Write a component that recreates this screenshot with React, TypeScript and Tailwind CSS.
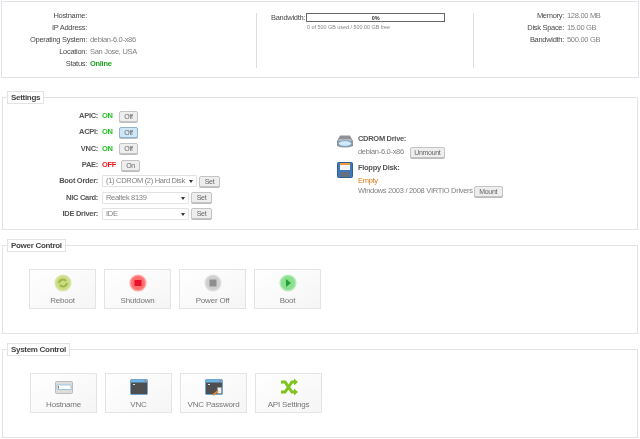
import type { ReactNode } from "react";

const LABEL = "text-[#4a4a4a]";
const VALUE = "text-[#808080]";

function Info({ label, width, children }: { label: string; width: string; children?: ReactNode }) {
  return (
    <div className="flex h-3 items-center whitespace-nowrap">
      <span className={`${width} shrink-0 text-right ${LABEL}`}>{label}</span>
      <span className={`ml-[3px] ${VALUE}`}>{children}</span>
    </div>
  );
}

function Btn({ children, active, width }: { children: ReactNode; active?: boolean; width: string }) {
  return (
    <span
      className={`inline-flex h-[11px] shrink-0 items-center justify-center rounded-[2px] border text-[7px] leading-none text-[#666] shadow-[0_1px_0_#bbb] ${width} ${
        active ? "border-[#8fb4d0] bg-[#cfe6f7]" : "border-[#c4c4c4] bg-[#eee]"
      }`}
    >
      {children}
    </span>
  );
}

function Toggle({ label, on, btn, active }: { label: string; on: boolean; btn: string; active?: boolean }) {
  return (
    <div className="flex h-[16.3px] items-center">
      <span className="w-[95px] shrink-0 text-right font-bold text-[#555]">{label}</span>
      <span className={`ml-[4px] font-bold ${on ? "w-[17px] text-[#1fc31f]" : "w-[19px] text-[#f01818]"}`}>{on ? "ON" : "OFF"}</span>
      <Btn active={active} width="w-[19px]">{btn}</Btn>
    </div>
  );
}

function Pick({ label, value, width }: { label: string; value: string; width: string }) {
  return (
    <div className="flex h-[16.3px] items-center">
      <span className="w-[95px] shrink-0 text-right font-bold text-[#555]">{label}</span>
      <span className={`relative ml-[4px] mr-[2px] flex h-[12px] items-center overflow-hidden whitespace-nowrap rounded-[1px] border border-[#e2e2e2] bg-white pl-[3px] ${width} ${VALUE}`}>
        {value}
        <span className="absolute right-[3px] top-[4px] h-0 w-0 border-x-[2.5px] border-t-[3px] border-x-transparent border-t-[#333]" />
      </span>
      <Btn width="w-[21px]">Set</Btn>
    </div>
  );
}

function Section({ title, className, children }: { title: string; className: string; children: ReactNode }) {
  return (
    <fieldset className={`mx-[2px] border border-[#e3e3e3] ${className}`}>
      <legend className="ml-[4px] border border-[#e3e3e3] bg-white px-[3px] text-[8px] font-bold leading-[11px] tracking-[-0.3px] text-[#444]">{title}</legend>
      {children}
    </fieldset>
  );
}

function Tile({ label, icon }: { label: string; icon: ReactNode }) {
  return (
    <div className="flex h-10 w-[67px] flex-col items-center border border-[#e4e4e4] bg-gradient-to-br from-white to-[#f5f5f5] pt-[4px]">
      <svg width="18" height="18" viewBox="0 0 18 18">{icon}</svg>
      <span className="mt-[4px] text-[8px] leading-[10px] tracking-[-0.2px] text-[#777]">{label}</span>
    </div>
  );
}

function Circle({ fill, edge }: { fill: string; edge: string }) {
  return <circle cx="9" cy="9" r="7.8" fill={fill} stroke={edge} strokeWidth="1.5" />;
}

function Window({ badge }: { badge?: boolean }) {
  return (
    <>
      <rect x="0.5" y="1.5" width="17" height="15" rx="1" fill="#4f4f4f" stroke="#6fa6cf" />
      <rect x="1" y="2" width="16" height="2.5" fill="#6db4e4" />
      <rect x="14.5" y="2.5" width="1.5" height="1" fill="#e05050" />
      <rect x="3" y="6" width="2" height="1" fill="#ddd" />
      {badge && (
        <>
          <rect x="12.5" y="9.5" width="4" height="6" fill="#eee" stroke="#999" strokeWidth="0.5" />
          <path d="M8 17 L13 13" stroke="#e08a2e" strokeWidth="1.8" />
        </>
      )}
    </>
  );
}

export default function App() {
  return (
    <div className="h-[439px] w-[640px] overflow-hidden bg-white pt-px font-['Liberation_Sans',sans-serif] text-[7.5px] leading-3 tracking-[-0.3px] blur-[0.35px]">
      <div className="mx-px flex h-[77px] border border-[#dfe3e8] pt-[11px]">
        <div className="h-[55px] w-[255px] border-r border-[#ddd]">
          <div className="-mt-[3px]">
            <Info label="Hostname:" width="w-[85px]" />
            <Info label="IP Address:" width="w-[85px]" />
            <Info label="Operating System:" width="w-[85px]">debian-6.0-x86</Info>
            <Info label="Location:" width="w-[85px]">San Jose, USA</Info>
            <Info label="Status:" width="w-[85px]"><span className="font-bold text-[#1aa51a]">Online</span></Info>
          </div>
        </div>
        <div className="h-[55px] w-[217px] border-r border-[#ddd] pl-[14px]">
          <div className="flex h-[9px] items-center">
            <span className={LABEL}>Bandwidth:</span>
            <div className="ml-px flex h-[9px] w-[139px] items-center justify-center border border-[#666] text-[5.5px] font-bold tracking-normal text-[#333]">0%</div>
          </div>
          <div className="ml-[36px] mt-[1px] text-[5.4px] leading-[8px] tracking-normal text-[#888]">0 of 500 GB used / 500.00 GB free</div>
        </div>
        <div>
          <div className="-mt-[3px]">
            <Info label="Memory:" width="w-[90px]">128.00 MB</Info>
            <Info label="Disk Space:" width="w-[90px]">15.00 GB</Info>
            <Info label="Bandwidth:" width="w-[90px]">500.00 GB</Info>
          </div>
        </div>
      </div>

      <Section title="Settings" className="mt-[13px] h-[139px]">
        <div className="flex">
          <div className="w-[333px] pt-[4px]">
            <Toggle label="APIC:" on btn="Off" />
            <Toggle label="ACPI:" on btn="Off" active />
            <Toggle label="VNC:" on btn="Off" />
            <Toggle label="PAE:" on={false} btn="On" />
            <Pick label="Boot Order:" value="(1) CDROM (2) Hard Disk" width="w-[95px]" />
            <Pick label="NIC Card:" value="Realtek 8139" width="w-[87px]" />
            <Pick label="IDE Driver:" value="IDE" width="w-[87px]" />
          </div>
          <div className="pt-[29px]">
            <div className="flex gap-[4px]">
              <svg width="18" height="16" viewBox="0 0 18 16" className="mt-[1px]">
                <path d="M1 7 L4 1.5 H14 L17 7 V12 Q9 15 1 12 Z" fill="#8f9398" />
                <path d="M3 5 H15 L16 7 H2 Z" fill="#b5b8bc" />
                <ellipse cx="9" cy="9.5" rx="6.5" ry="2.8" fill="#d5e8f5" stroke="#6fa8d6" strokeWidth="0.8" />
              </svg>
              <div>
                <div className="font-bold leading-[11px] text-[#555]">CDROM Drive:</div>
                <div className="mt-[2px] flex items-center gap-[6px]">
                  <span className={VALUE}>debian-6.0-x86</span>
                  <Btn width="w-[35px]">Unmount</Btn>
                </div>
              </div>
            </div>
            <div className="mt-[4px] flex gap-[4px]">
              <svg width="16" height="16" viewBox="0 0 16 16" className="ml-[1px] mr-px">
                <rect x="0.5" y="0.5" width="15" height="15" rx="1" fill="#3f79b8" stroke="#2e5f96" />
                <rect x="3" y="1" width="10" height="2" fill="#ef9c3e" />
                <rect x="3" y="3" width="10" height="5" fill="#f4f4f4" />
                <rect x="4" y="10" width="8" height="5" fill="#6b7078" />
              </svg>
              <div>
                <div className="font-bold leading-[11px] text-[#555]">Floppy Disk:</div>
                <div className="mt-[4px] leading-[8px] text-[#e07b1a]">Empty</div>
                <div className="flex items-center gap-[1px]">
                  <span className={`whitespace-nowrap ${VALUE}`}>Windows 2003 / 2008 VIRTIO Drivers</span>
                  <Btn width="w-[29px]">Mount</Btn>
                </div>
              </div>
            </div>
          </div>
        </div>
      </Section>

      <Section title="Power Control" className="mt-[9px] h-[95px]">
        <div className="flex gap-2 pl-[26px] pt-[17px]">
          <Tile label="Reboot" icon={<><Circle fill="#cbdc85" edge="#dbe5a8" /><path d="M5 9 a4 4 0 0 1 7-2 M13 9 a4 4 0 0 1-7 2" fill="none" stroke="#9fb84a" strokeWidth="2" /></>} />
          <Tile label="Shutdown" icon={<><Circle fill="#ff6e6e" edge="#ffa3a3" /><rect x="5.5" y="6" width="7" height="6" fill="#e8102a" /></>} />
          <Tile label="Power Off" icon={<><Circle fill="#cfcfcf" edge="#dedede" /><rect x="5.5" y="5.5" width="7" height="7" fill="#8f8f8f" /></>} />
          <Tile label="Boot" icon={<><Circle fill="#8be08f" edge="#b3ecb5" /><path d="M7 5 L12 9 L7 13 Z" fill="#1f9f3c" /></>} />
        </div>
      </Section>

      <Section title="System Control" className="mt-[9px] h-[95px]">
        <div className="flex gap-2 pl-[27px] pt-[17px]">
          <Tile label="Hostname" icon={<><rect x="0.5" y="3.5" width="17" height="12" rx="1" fill="#ddd" stroke="#bbb" /><rect x="2" y="7" width="14" height="4.5" rx="0.5" fill="#fff" stroke="#7db4dc" strokeWidth="0.7" /><rect x="3" y="8" width="0.8" height="2.5" fill="#555" /></>} />
          <Tile label="VNC" icon={<Window />} />
          <Tile label="VNC Password" icon={<Window badge />} />
          <Tile label="API Settings" icon={<><path d="M1 4 H5 L12 14 H15 M1 14 H5 L12 4 H15" fill="none" stroke="#7fc31c" strokeWidth="3" /><path d="M14 0.5 L18 4 L14 7.5 Z M14 10.5 L18 14 L14 17.5 Z" fill="#7fc31c" /></>} />
        </div>
      </Section>
    </div>
  );
}
